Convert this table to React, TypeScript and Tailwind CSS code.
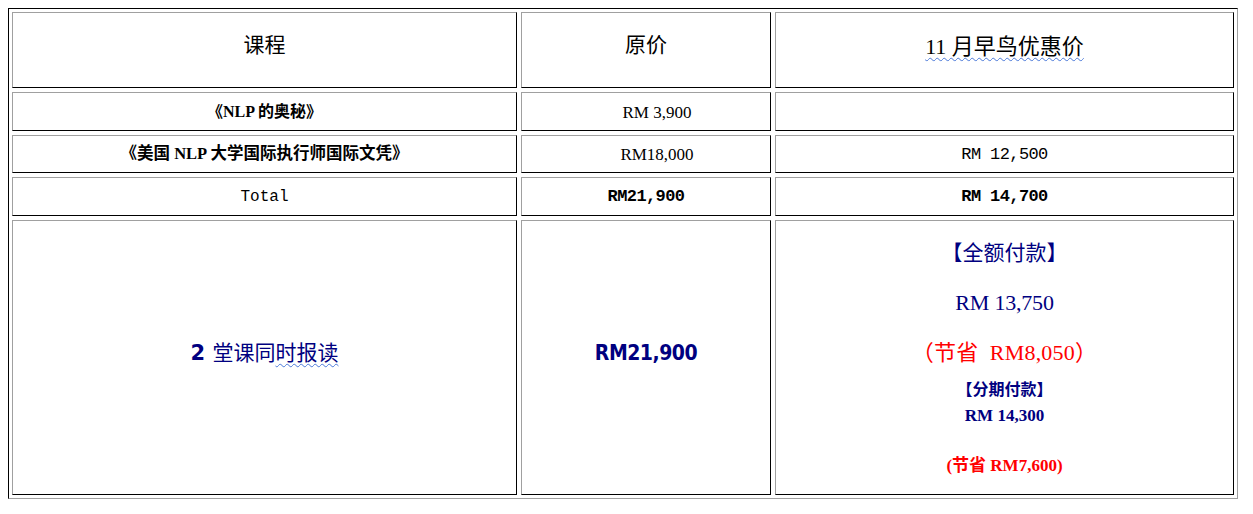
const cell =
  "flex flex-col items-center justify-center border border-t-[#a0a0a0] border-l-[#a0a0a0] border-b-black border-r-black bg-white";

const serif = "font-['Liberation_Serif','Noto_Sans_CJK_SC',serif]";
const mono = "font-['Liberation_Mono','Noto_Sans_CJK_SC',monospace]";
const squiggle = "underline decoration-wavy decoration-[#4a78d8] decoration-1 underline-offset-[3px]";

export default function App() {
  return (
    <div className="min-h-[514px] bg-white p-2">
      <div className="w-[1230px] border border-t-black border-l-black border-b-[#a0a0a0] border-r-[#a0a0a0] p-[3px]">
        <div className="grid grid-cols-[505px_250px_459px] grid-rows-[76px_39px_38px_39px_275px] gap-[4px] text-black">
          {/* header */}
          <div className={cell}>
            <span className={`${serif} -mt-2 text-[21px]`}>课程</span>
          </div>
          <div className={cell}>
            <span className={`${serif} -mt-2 text-[21px]`}>原价</span>
          </div>
          <div className={cell}>
            <span className={`${serif} -mt-2 text-[22px] ${squiggle}`}>11 月早鸟优惠价</span>
          </div>

          {/* row 2 */}
          <div className={cell}>
            <span className={`${serif} text-[16px] font-bold`}>《NLP 的奥秘》</span>
          </div>
          <div className={cell}>
            <span className={`${serif} ml-[22px] mt-[2px] text-[17px]`}>RM 3,900</span>
          </div>
          <div className={cell} />

          {/* row 3 */}
          <div className={cell}>
            <span className={`${serif} text-[16.5px] font-bold`}>《美国 NLP 大学国际执行师国际文凭》</span>
          </div>
          <div className={cell}>
            <span className={`${serif} ml-[22px] mt-[2px] text-[17px]`}>RM18,000</span>
          </div>
          <div className={cell}>
            <span className={`${mono} mt-[2px] text-[17px] tracking-[-0.6px]`}>RM 12,500</span>
          </div>

          {/* row 4 */}
          <div className={cell}>
            <span className={`${mono} text-[16px]`}>Total</span>
          </div>
          <div className={cell}>
            <span className={`${mono} text-[17px] font-bold tracking-[-0.6px]`}>RM21,900</span>
          </div>
          <div className={cell}>
            <span className={`${mono} text-[17px] font-bold tracking-[-0.6px]`}>RM 14,700</span>
          </div>

          {/* row 5 */}
          <div className={cell}>
            <span className="-mt-[8px] text-[21px] text-[#000080]">
              <span className="font-['DejaVu_Sans',sans-serif] font-bold">2 </span>
              <span className={serif}>
                堂课同<span className={squiggle}>时报读</span>
              </span>
            </span>
          </div>
          <div className={cell}>
            <span className="-mt-[7px] font-['DejaVu_Sans_Condensed','DejaVu_Sans',sans-serif] text-[21px] font-bold tracking-[-0.5px] text-[#000080]">
              RM21,900
            </span>
          </div>
          <div className={`${cell} justify-start pt-[18px] ${serif}`}>
            <span className="text-[21px] leading-[28px] text-[#000080]">【全额付款】</span>
            <span className="mt-[22px] text-[22px] leading-[28px] tracking-[-0.2px] text-[#000080]">RM 13,750</span>
            <span className="mt-[22px] text-[22px] leading-[28px] tracking-[0.2px] text-[#ff0000]">（节省&nbsp; RM8,050）</span>
            <span className="mt-[12px] text-[16px] font-bold leading-[22px] text-[#000080]">【分期付款】</span>
            <span className="mt-[4px] text-[17px] font-bold leading-[22px] text-[#000080]">RM 14,300</span>
            <span className="mt-[28px] text-[17px] font-bold leading-[22px] text-[#ff0000]">(节省 RM7,600)</span>
          </div>
        </div>
      </div>
    </div>
  );
}
